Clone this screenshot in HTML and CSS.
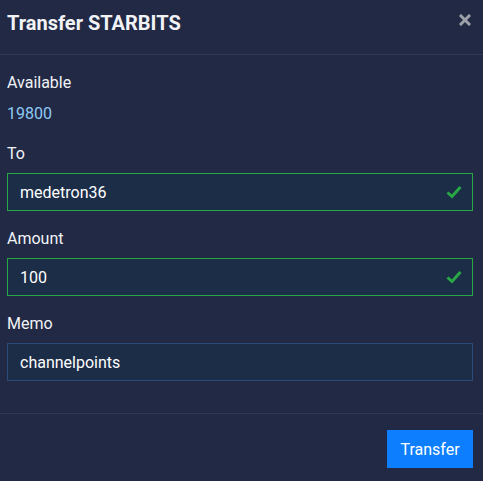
FILE: index.html
```html
<!DOCTYPE html>
<html lang="en">
<head>
    <meta charset="UTF-8">
    <meta name="viewport" content="width=device-width, initial-scale=1.0">
    <title>Transfer STARBITS</title>
    <link rel="stylesheet" href="styles.css">
</head>
<body>
    <div class="modal">
        <div class="modal-header">
            <h5 class="modal-title">Transfer STARBITS</h5>
            <button class="close" title="Close">
                <svg width="12" height="12" viewBox="0 0 12 12">
                    <path d="M2 2 L10 10 M10 2 L2 10" stroke="currentColor" stroke-width="3" stroke-linecap="square"/>
                </svg>
            </button>
        </div>

        <div class="modal-body">
            <div class="form-group">
                <label>Available</label>
                <div class="balance">19800</div>
            </div>
            <div class="form-group">
                <label for="to">To</label>
                <div class="input-wrap">
                    <input type="text" id="to" class="form-control is-valid" value="medetron36">
                    <svg class="valid-icon" width="16" height="14" viewBox="0 0 16 14">
                        <path d="M1.5 7.5 L6 11.5 L14.5 2" fill="none" stroke="currentColor" stroke-width="3"/>
                    </svg>
                </div>
            </div>
            <div class="form-group">
                <label for="amount">Amount</label>
                <div class="input-wrap">
                    <input type="text" id="amount" class="form-control is-valid" value="100">
                    <svg class="valid-icon" width="16" height="14" viewBox="0 0 16 14">
                        <path d="M1.5 7.5 L6 11.5 L14.5 2" fill="none" stroke="currentColor" stroke-width="3"/>
                    </svg>
                </div>
            </div>
            <div class="form-group">
                <label for="memo">Memo</label>
                <input type="text" id="memo" class="form-control" value="channelpoints">
            </div>
        </div>

        <div class="modal-footer">
            <button class="btn-primary">Transfer</button>
        </div>
    </div>
</body>
</html>
```

FILE: styles.css
```css
:root {
    --bg-color: #212945;
    --input-bg: #1c2d47;
    --text-color: #f1f3f6;
    --divider: #2f3752;
    --valid: #28a745;
    --input-border: #2b4a78;
    --balance: #8fc9f5;
    --primary: #0d7ffe;
}

body {
    margin: 0;
    background-color: var(--bg-color);
    color: var(--text-color);
    font-family: Roboto, 'Liberation Sans', sans-serif;
    font-size: 16px;
    line-height: 24px;
}

.modal {
    width: 483px;
    height: 481px;
    box-sizing: border-box;
}

.modal-header {
    display: flex;
    justify-content: space-between;
    align-items: flex-start;
    padding: 11px 12px 19px 7px;
    border-bottom: 1px solid var(--divider);
}

.modal-title {
    margin: 0;
    font-size: 20px;
    font-weight: 700;
    line-height: 24px;
}

.close {
    background: none;
    border: none;
    padding: 0;
    margin-top: 3px;
    color: #9ea1aa;
    cursor: pointer;
    display: flex;
}

.modal-body {
    padding: 16px 10px 16px 7px;
}

.form-group {
    margin-bottom: 16px;
}

label {
    display: block;
    margin-bottom: 7px;
}

.balance {
    color: var(--balance);
}

.input-wrap {
    position: relative;
}

.form-control {
    display: block;
    width: 100%;
    height: 38px;
    box-sizing: border-box;
    padding: 6px 12px;
    background-color: var(--input-bg);
    border: 1px solid var(--input-border);
    color: #ffffff;
    font-family: inherit;
    font-size: 16px;
    font-weight: 400;
    outline: none;
}

.form-control.is-valid {
    border-color: var(--valid);
    padding-right: 40px;
}

.valid-icon {
    position: absolute;
    top: 12px;
    right: 11px;
    color: var(--valid);
}

.modal-footer {
    display: flex;
    justify-content: flex-end;
    padding: 16px 10px 16px 7px;
    border-top: 1px solid var(--divider);
}

.btn-primary {
    background-color: var(--primary);
    color: #ffffff;
    border: none;
    width: 86px;
    height: 38px;
    font-family: inherit;
    font-size: 16px;
    font-weight: 400;
    cursor: pointer;
}
```
